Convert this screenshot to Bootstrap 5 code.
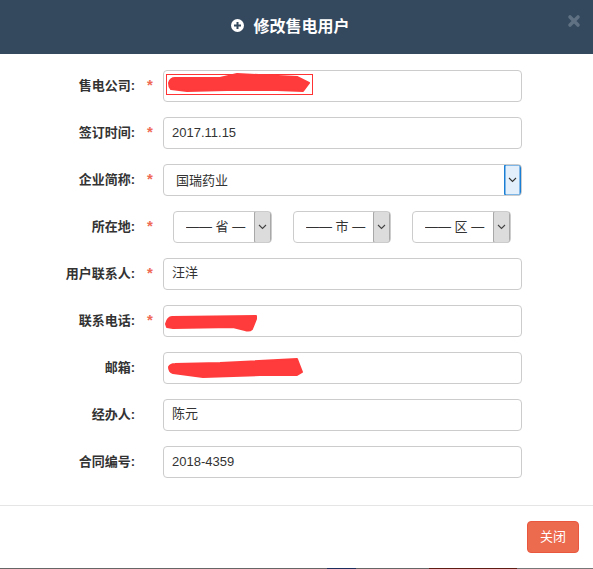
<!DOCTYPE html>
<html lang="zh">
<head>
<meta charset="utf-8">
<link href="https://cdn.jsdelivr.net/npm/bootstrap@5.3.0/dist/css/bootstrap.min.css" rel="stylesheet">
<style>
html,body{background:#fff;margin:0;overflow:hidden}
body{font-family:"Liberation Sans","Noto Sans CJK SC",sans-serif;font-size:13px;color:#333;width:593px;height:569px}
.dlg-head{height:54px;background:#34495e;color:#fff;position:relative;padding:0 12px 4px 0}
.dlg-title{font-family:"Noto Sans CJK SC",sans-serif;font-size:16px;font-weight:700;line-height:1;gap:9px}
.dlg-x{position:absolute;left:567px;top:14px;width:14px;height:14px}
.dlg-body{padding:16px 0 0;height:452px;border-bottom:1px solid #e5e5e5}
.frow{height:32px;margin-bottom:15px;display:flex;align-items:center}
.flabel{width:135px;text-align:right;font-weight:700;font-size:13px;color:#333;flex:none}
.fstar{width:28px;flex:none;color:#ef6a55;font-size:15px;font-weight:700;text-align:left;padding-left:12px;margin-top:-1px}
.fwrap{width:359px;flex:none;position:relative}
.finput.form-control{height:32px;border:1px solid #ccc;border-radius:4px;padding:3px 8px 5px;font-size:13px;color:#333;box-shadow:none;font-family:"Liberation Sans","Noto Sans CJK SC",sans-serif}
.finput.form-control.cjkval{padding:1px 8px 7px}
.fsel.form-select{height:32px;border:1px solid #ccc;border-radius:4px;padding:5px 22px 3px 12px;font-size:13px;color:#333;font-family:"Liberation Sans","Noto Sans CJK SC",sans-serif;background-size:17px 32px;background-position:right 0 center;background-repeat:no-repeat}
.sel-blue{background-image:url("data:image/svg+xml,%3Csvg xmlns='http://www.w3.org/2000/svg' width='17' height='32'%3E%3Crect x='.75' y='.75' width='15.5' height='30.5' rx='1.5' fill='%23e3f0fb' stroke='%231a7fd4' stroke-width='1.5'/%3E%3Cpath d='M5 14l3.5 3.5L12 14' fill='none' stroke='%23333' stroke-width='1.1'/%3E%3C/svg%3E")}
.sel-grey{background-image:url("data:image/svg+xml,%3Csvg xmlns='http://www.w3.org/2000/svg' width='17' height='32'%3E%3Crect x='.5' y='.5' width='16' height='31' rx='1.5' fill='%23dcdcdc' stroke='%23a8a8a8'/%3E%3Cpath d='M5 14l3.5 3.5L12 14' fill='none' stroke='%23444' stroke-width='1.1'/%3E%3C/svg%3E")}
.area-wrap{display:flex;margin-left:10px;gap:21px}
.area-wrap .fsel.form-select{width:99px;flex:none;padding:4px 17px 4px 12px}
.area-wrap .fsel.form-select:nth-child(2){width:98px}
.scribble{position:absolute;left:0;top:0;pointer-events:none}
.scribble path{fill:#ff3b3b;stroke:#ff3b3b;stroke-width:2;stroke-linejoin:round}
.dlg-foot{height:62px;display:flex;justify-content:flex-end;padding:15px 14px 0 0}
.btn-close-x.btn{width:52px;height:32px;background:#ec6a4e;border:1px solid #e9573f;color:#fff;font-size:13px;padding:0;border-radius:4px}
.edge-strip{height:1px;background:linear-gradient(90deg,#666 327px,#1c2f5c 327px,#1c2f5c 356px,#666 356px,#666 429px,#5e1d14 429px,#5e1d14 517px,#777 517px)}
</style>
</head>
<body>
<div class="dlg-head d-flex align-items-center justify-content-center">
  <div class="d-flex align-items-center dlg-title">
    <svg width="13" height="13" viewBox="0 0 13 13"><circle cx="6.5" cy="6.5" r="6.5" fill="#fff"/><path d="M3 6.5h7M6.5 3v7" stroke="#34495e" stroke-width="2"/></svg>
    <span>修改售电用户</span>
  </div>
  <svg class="dlg-x" viewBox="0 0 14 14"><path d="M3 3l8 8M11 3l-8 8" stroke="#5f7183" stroke-width="3.6" stroke-linecap="round"/></svg>
</div>
<div class="dlg-body">
  <form>
    <div class="frow"><div class="flabel">售电公司:</div><div class="fstar">*</div><div class="fwrap">
      <input class="form-control finput" value="">
      <svg class="scribble" width="160" height="32"><rect x="3.5" y="4.5" width="146" height="20" fill="none" stroke="#f33" stroke-width="1"/><path d="M6 13C7 9 9 8 12 8L57 8 74 4 134 7 146 13 140 21 114 20 64 20 24 21 8 19C6 17 6 15 6 13Z"/></svg>
    </div></div>
    <div class="frow"><div class="flabel">签订时间:</div><div class="fstar">*</div><div class="fwrap"><input class="form-control finput" value="2017.11.15"></div></div>
    <div class="frow"><div class="flabel">企业简称:</div><div class="fstar">*</div><div class="fwrap"><select class="form-select fsel sel-blue"><option>国瑞药业</option></select></div></div>
    <div class="frow"><div class="flabel">所在地:</div><div class="fstar">*</div><div class="area-wrap">
      <select class="form-select fsel sel-grey"><option>—— 省 —</option></select>
      <select class="form-select fsel sel-grey"><option>—— 市 —</option></select>
      <select class="form-select fsel sel-grey"><option>—— 区 —</option></select>
    </div></div>
    <div class="frow"><div class="flabel">用户联系人:</div><div class="fstar">*</div><div class="fwrap"><input class="form-control finput cjkval" value="汪洋"></div></div>
    <div class="frow"><div class="flabel">联系电话:</div><div class="fstar">*</div><div class="fwrap">
      <input class="form-control finput" value="">
      <svg class="scribble" width="110" height="32"><path d="M3 19C4 15 6 12 9 12L93 11 93 14 89 24C87 26 85 26 82 25L70 22 10 23 4 22Z"/></svg>
    </div></div>
    <div class="frow"><div class="flabel">邮箱:</div><div class="fstar"></div><div class="fwrap">
      <input class="form-control finput" value="">
      <svg class="scribble" width="150" height="32"><path d="M6 15C7 13 9 12 12 12L57 11 134 7 139 20 134 23 97 23 40 25 10 21C7 20 6 18 6 15Z"/></svg>
    </div></div>
    <div class="frow"><div class="flabel">经办人:</div><div class="fstar"></div><div class="fwrap"><input class="form-control finput cjkval" value="陈元"></div></div>
    <div class="frow"><div class="flabel">合同编号:</div><div class="fstar"></div><div class="fwrap"><input class="form-control finput" value="2018-4359"></div></div>
  </form>
</div>
<div class="dlg-foot"><button type="button" class="btn btn-close-x">关闭</button></div>
<div class="edge-strip"></div>
</body>
</html>
